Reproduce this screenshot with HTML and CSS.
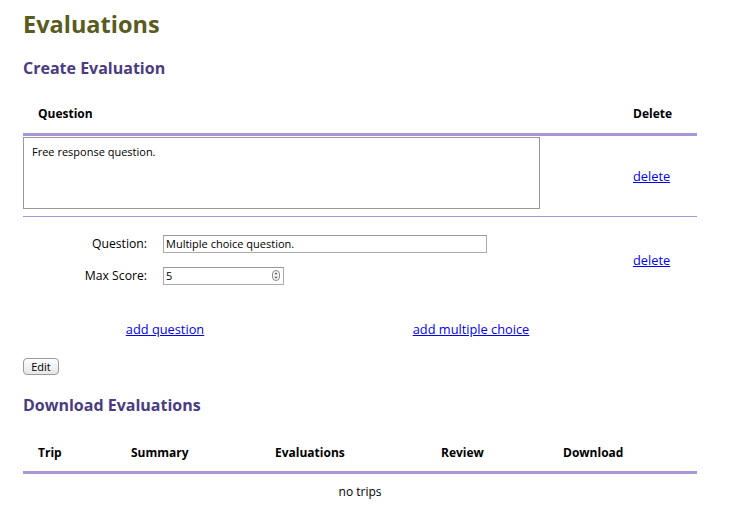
FILE: index.html
```html
<!DOCTYPE html>
<html>
<head>
<meta charset="utf-8">
<link rel="stylesheet" href="styles.css">
</head>
<body>
<div class="page">
  <h1 class="title">Evaluations</h1>
  <h2 class="section">Create Evaluation</h2>
  <div class="qtable">
    <div class="qhead">
      <div class="hcell qcol">Question</div>
      <div class="hcell dcol">Delete</div>
    </div>
    <div class="qrow first">
      <div class="qcol-body"><div class="textarea">Free response question.</div></div>
      <div class="dcol"><a href="#">delete</a></div>
    </div>
    <div class="qrow second">
      <div class="qcol-body">
        <div class="form">
          <label class="lbl">Question:</label>
          <div class="input wide">Multiple choice question.</div>
          <label class="lbl">Max Score:</label>
          <div class="input narrow">5<span class="spin"><svg width="8" height="11" viewBox="0 0 8 11"><rect x="0.5" y="0.5" width="7" height="10" rx="3.5" fill="#f4f4f4" stroke="#8a8a8a"/><path d="M2.5 4.3 L4 2.6 L5.5 4.3 Z" fill="#444"/><path d="M2.5 6.7 L4 8.4 L5.5 6.7 Z" fill="#444"/></svg></span></div>
        </div>
      </div>
      <div class="dcol"><a href="#">delete</a></div>
    </div>
  </div>
  <div class="addrow">
    <div class="addcell a1"><a href="#">add question</a></div>
    <div class="addcell a2"><a href="#">add multiple choice</a></div>
  </div>
  <button class="btn">Edit</button>
  <h2 class="section dl">Download Evaluations</h2>
  <div class="ttable">
    <div class="thead">
      <div class="hcell c1">Trip</div>
      <div class="hcell c2">Summary</div>
      <div class="hcell c3">Evaluations</div>
      <div class="hcell c4">Review</div>
      <div class="hcell c5">Download</div>
    </div>
    <div class="empty">no trips</div>
  </div>
</div>
</body>
</html>
```

FILE: styles.css
```css
html, body { margin: 0; padding: 0; background: #fff; }
body { font-family: "Open Sans", "DejaVu Sans", sans-serif; color: #000; }
.page { padding: 0 55px 0 23px; width: 674px; }
.title { margin: 0; padding-top: 9px; font-size: 23.5px; line-height: 30px; font-weight: bold; color: #5a5b1e; }
.section { margin: 0; padding-top: 19px; font-size: 16px; line-height: 20px; font-weight: bold; color: #4a3c80; }
.section.dl { padding-top: 20px; }
.qhead { display: flex; border-bottom: 3px solid #a996d9; padding: 28px 0 11px; line-height: 16px; }
.hcell { font-size: 12px; font-weight: bold; padding-left: 15px; box-sizing: border-box; line-height: 16px; }
.qcol { width: 595px; }
.dcol { width: 79px; padding-left: 15px; box-sizing: border-box; font-size: 12px; line-height: 16px; }
.qrow { display: flex; align-items: center; }
.qrow.first { height: 80px; border-bottom: 1px solid #a996d9; align-items: stretch; }
.qrow.first .dcol { align-self: center; }
.qrow.second { height: 86px; }
.qcol-body { width: 595px; }
.textarea { width: 517px; height: 72px; box-sizing: border-box; border: 1px solid #999; font-size: 11px; line-height: 14px; padding: 7px 8px; margin-top: 1px; }
.form { display: grid; grid-template-columns: 124px auto; column-gap: 16px; row-gap: 14px; align-items: center; }
.lbl { text-align: right; font-size: 12.2px; line-height: 16px; }
.input { box-sizing: border-box; height: 18px; border: 1px solid #aaa; border-top-color: #999; font-size: 11px; line-height: 16px; padding-left: 2px; position: relative; }
.wide { width: 324px; }
.narrow { width: 121px; }
.spin { position: absolute; right: 3px; top: 2px; line-height: 0; }
a { color: #0000ee; text-decoration: underline; font-size: 12.8px; line-height: 16px; }
.addrow { display: flex; margin-top: 18px; height: 16px; line-height: 16px; }
.addcell { text-align: center; font-size: 12px; }
.a1 { width: 284px; }
.a2 { width: 328px; }
.btn { margin-top: 21px; display: block; width: 36px; height: 17px; padding: 0; border: 1px solid #9a9a9a; border-radius: 4px; background: linear-gradient(#ffffff, #e6e6e6); font-family: "Open Sans", sans-serif; font-size: 11px; line-height: 15px; color: #000; }
.thead { display: flex; border-bottom: 3px solid #a996d9; padding: 30px 0 10px; }
.c1 { width: 93px; }
.c2 { width: 144px; }
.c3 { width: 166px; }
.c4 { width: 122px; }
.c5 { width: 149px; }
.empty { text-align: center; font-size: 12px; line-height: 16px; padding-top: 10px; }
```
